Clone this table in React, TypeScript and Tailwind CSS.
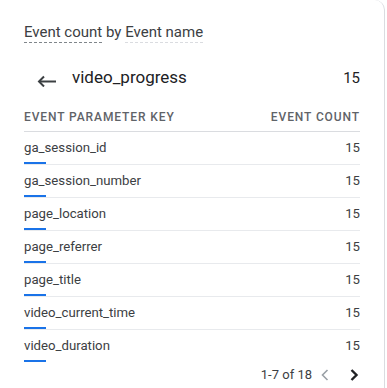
const rows = [
  "ga_session_id",
  "ga_session_number",
  "page_location",
  "page_referrer",
  "page_title",
  "video_current_time",
  "video_duration",
];

function BackArrow() {
  return (
    <svg width="20" height="12" viewBox="0 0 20 12" fill="none">
      <path d="M19 6.5H2" stroke="#3c4043" strokeWidth="2" />
      <path d="M7 1.5L2 6.5L7 11.5" stroke="#3c4043" strokeWidth="2" strokeLinejoin="miter" />
    </svg>
  );
}

function Chevron({ dir, color, width }: { dir: "left" | "right"; color: string; width: number }) {
  return (
    <svg width="10" height="12" viewBox="0 0 10 12" fill="none">
      {dir === "left" ? (
        <path d="M7.5 1L2.5 6L7.5 11" stroke={color} strokeWidth={width} />
      ) : (
        <path d="M2.5 1L7.5 6L2.5 11" stroke={color} strokeWidth={width} />
      )}
    </svg>
  );
}

export default function App() {
  return (
    <div className="w-[387px] h-[388px] bg-white overflow-hidden font-['Roboto',_'Liberation_Sans',_sans-serif]">
      <div className="w-[385px] h-[400px] border-r border-[#dadce0] rounded-tr-[10px] px-6 pt-[22px]">
        {/* title */}
        <div className="text-[15px] leading-[20px] text-[#3c4043]">
          <span className="inline-block border-b border-dashed border-[#80868b] leading-[19px]">Event count</span>{" "}
          by{" "}
          <span className="inline-block border-b border-dashed border-[#dadce0] leading-[19px]">Event name</span>
        </div>

        {/* selected event */}
        <div className="mt-[19px] h-[32px] flex items-center">
          <div className="w-[48px] flex justify-center pr-[2px] pt-[6px]">
            <BackArrow />
          </div>
          <div className="flex-1 text-[17px] text-[#202124]">video_progress</div>
          <div className="text-[15px] text-[#202124]">15</div>
        </div>

        {/* header */}
        <div className="mt-[8px] h-[30px] flex items-center justify-between border-b border-[#dadce0] text-[12px] tracking-[0.9px] text-[#5f6368] font-medium">
          <span>EVENT PARAMETER KEY</span>
          <span>EVENT COUNT</span>
        </div>

        {/* rows */}
        {rows.map((r, i) => (
          <div
            key={r}
            className={`h-[33px] flex flex-col border-b ${i < rows.length - 1 ? "border-[#e8eaed]" : "border-transparent"}`}
          >
            <div className="flex-1 flex items-center justify-between text-[13.2px] text-[#3c4043] pt-[2px]">
              <span>{r}</span>
              <span>15</span>
            </div>
            <div className="h-[2px] w-[22px] bg-[#1a73e8]" />
          </div>
        ))}

        {/* pagination */}
        <div className="mt-[2px] h-[20px] flex items-center justify-end text-[13px] text-[#3c4043]">
          <span className="mr-[8px]">1-7 of 18</span>
          <span className="mr-[19px]">
            <Chevron dir="left" color="#9aa0a6" width={1.6} />
          </span>
          <span className="mr-[1px]">
            <Chevron dir="right" color="#202124" width={2.4} />
          </span>
        </div>
      </div>
    </div>
  );
}
